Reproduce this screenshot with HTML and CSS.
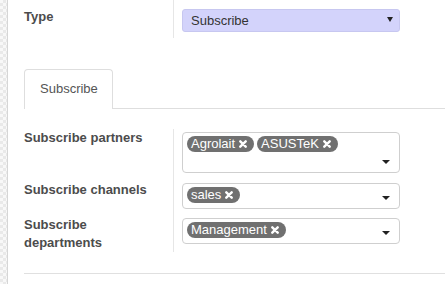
FILE: index.html
```html
<!DOCTYPE html>
<html>
<head>
<meta charset="utf-8">
<link rel="stylesheet" href="styles.css">
</head>
<body>
<div class="page">
  <div class="strip"></div>
  <div class="sheet">
    <div class="group group-top">
      <div class="label">Type</div>
      <div class="field">
        <div class="select"><span>Subscribe</span><span class="tri"></span></div>
      </div>
    </div>

    <div class="tabs">
      <div class="tab">Subscribe</div>
      <div class="tab-rest"></div>
    </div>

    <div class="group group-main">
      <div class="label">Subscribe partners</div>
      <div class="field first">
        <div class="m2m tall">
          <div class="tags">
            <span class="tag">Agrolait <svg class="x" viewBox="0 0 8 8"><path d="M1.3 1.3L6.7 6.7M6.7 1.3L1.3 6.7"/></svg></span>
            <span class="tag">ASUSTeK <svg class="x" viewBox="0 0 8 8"><path d="M1.3 1.3L6.7 6.7M6.7 1.3L1.3 6.7"/></svg></span>
          </div>
          <span class="caret"></span>
        </div>
      </div>

      <div class="label">Subscribe channels</div>
      <div class="field">
        <div class="m2m">
          <div class="tags">
            <span class="tag">sales <svg class="x" viewBox="0 0 8 8"><path d="M1.3 1.3L6.7 6.7M6.7 1.3L1.3 6.7"/></svg></span>
          </div>
          <span class="caret"></span>
        </div>
      </div>

      <div class="label">Subscribe departments</div>
      <div class="field">
        <div class="m2m">
          <div class="tags">
            <span class="tag">Management <svg class="x" viewBox="0 0 8 8"><path d="M1.3 1.3L6.7 6.7M6.7 1.3L1.3 6.7"/></svg></span>
          </div>
          <span class="caret"></span>
        </div>
      </div>
    </div>

    <div class="bottom-line"></div>
  </div>
</div>
</body>
</html>
```

FILE: styles.css
```css
html, body {
  margin: 0;
  padding: 0;
  background: #fff;
}

body {
  font-family: "Liberation Sans", Arial, sans-serif;
  font-size: 13px;
  line-height: 18px;
  color: #4c4c4c;
  width: 445px;
  height: 284px;
  overflow: hidden;
}

.page {
  display: flex;
  height: 284px;
}

.strip {
  width: 7px;
  flex: none;
  border-right: 1px solid #d6d6d6;
  background-color: #f4f4f4;
  background-image: repeating-conic-gradient(#e9e9e9 0 25%, #f8f8f8 0 50%);
  background-size: 6px 6px;
}

.sheet {
  flex: 1;
  padding-left: 16px;
}

.group {
  display: grid;
  grid-template-columns: 150px 226px;
}

.label {
  font-weight: bold;
  color: #4c4c4c;
  padding-right: 8px;
  border-right: 1px solid #e6e6e6;
}

.field {
  padding-left: 8px;
}

.group-top .label {
  padding-top: 8px;
  height: 30px;
}

.group-top .field {
  padding-top: 9px;
}

.select {
  width: 218px;
  height: 23px;
  box-sizing: border-box;
  background: #d3d3fb;
  border: 1px solid #c7c7f0;
  border-radius: 3px;
  display: flex;
  align-items: center;
  justify-content: space-between;
  padding: 0 6px 0 8px;
  color: #333;
}

.tri {
  width: 0;
  height: 0;
  border-left: 3px solid transparent;
  border-right: 3px solid transparent;
  border-top: 5px solid #222;
  margin-top: -2px;
}

.tabs {
  display: flex;
  margin-top: 31px;
  height: 40px;
}

.tab {
  width: 89px;
  box-sizing: border-box;
  border: 1px solid #dedede;
  border-bottom: none;
  border-radius: 4px 4px 0 0;
  padding: 10px 0 0 15px;
  color: #555;
}

.tab-rest {
  flex: 1;
  border-bottom: 1px solid #dedede;
}

.group-main {
  margin-top: 20px;
}

.group-main .field {
  padding-top: 2px;
  padding-bottom: 7px;
}

.group-main .field.first {
  padding-top: 3px;
  padding-bottom: 8px;
}

.m2m {
  position: relative;
  width: 218px;
  height: 26px;
  box-sizing: border-box;
  border: 1px solid #cfcfcf;
  border-radius: 4px;
  padding: 3px 4px;
}

.m2m.tall {
  height: 41px;
}

.tags {
  display: flex;
  gap: 3px;
}

.tag {
  display: inline-flex;
  align-items: center;
  height: 16px;
  line-height: 16px;
  padding: 0 7px 0 4px;
  border-radius: 8px;
  background: #707070;
  color: #fff;
  gap: 4px;
}

.x {
  width: 8px;
  height: 8px;
  fill: none;
  stroke: #fff;
  stroke-width: 2.4;
  stroke-linecap: round;
}

.caret {
  position: absolute;
  right: 9px;
  bottom: 8px;
  width: 0;
  height: 0;
  border-left: 4px solid transparent;
  border-right: 4px solid transparent;
  border-top: 4px solid #222;
}

.bottom-line {
  margin-top: 21px;
  border-top: 1px solid #e0e0e0;
}
```
